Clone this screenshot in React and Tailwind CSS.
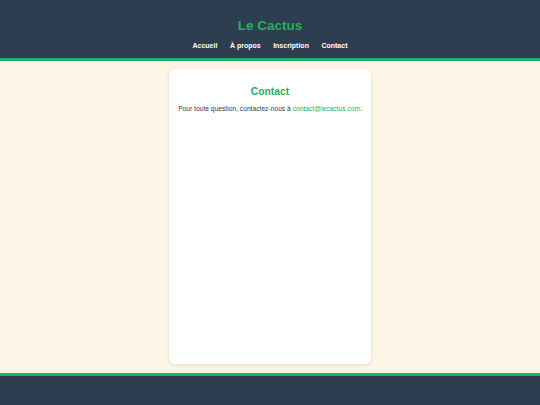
export default function App() {
  return (
    <div className="flex h-[405px] w-[540px] flex-col font-['Liberation_Sans',Arial,sans-serif]">
      <header className="h-[61px] border-b-[3px] border-[#27ae60] bg-[#2c3e50] pt-[17px] text-center">
        <h1 className="text-[13.5px] font-bold leading-[18px] text-[#27ae60]">Le Cactus</h1>
        <nav className="mt-[4px] flex justify-center gap-[12.5px] text-[7px] font-bold leading-[14px] text-white">
          <a>Accueil</a>
          <a>À propos</a>
          <a>Inscription</a>
          <a>Contact</a>
        </nav>
      </header>
      <main className="h-[312px] bg-[#fdf5e6] pt-[8px] pb-[9px]">
        <div className="mx-auto h-full w-[202px] rounded-[6px] bg-white px-[6px] pt-[16px] text-center shadow-[0_1px_4px_rgba(0,0,0,0.1)]">
          <h2 className="text-[10.3px] font-bold leading-[14px] text-[#27ae60]">Contact</h2>
          <p className="mt-[5px] text-[6.7px] leading-[10px] text-[#2c3e50]">
            Pour toute question, contactez-nous à <a className="text-[#27ae60]">contact@lecactus.com</a>.
          </p>
        </div>
      </main>
      <footer className="h-[32px] border-t-[3px] border-[#27ae60] bg-[#2c3e50]" />
    </div>
  );
}
